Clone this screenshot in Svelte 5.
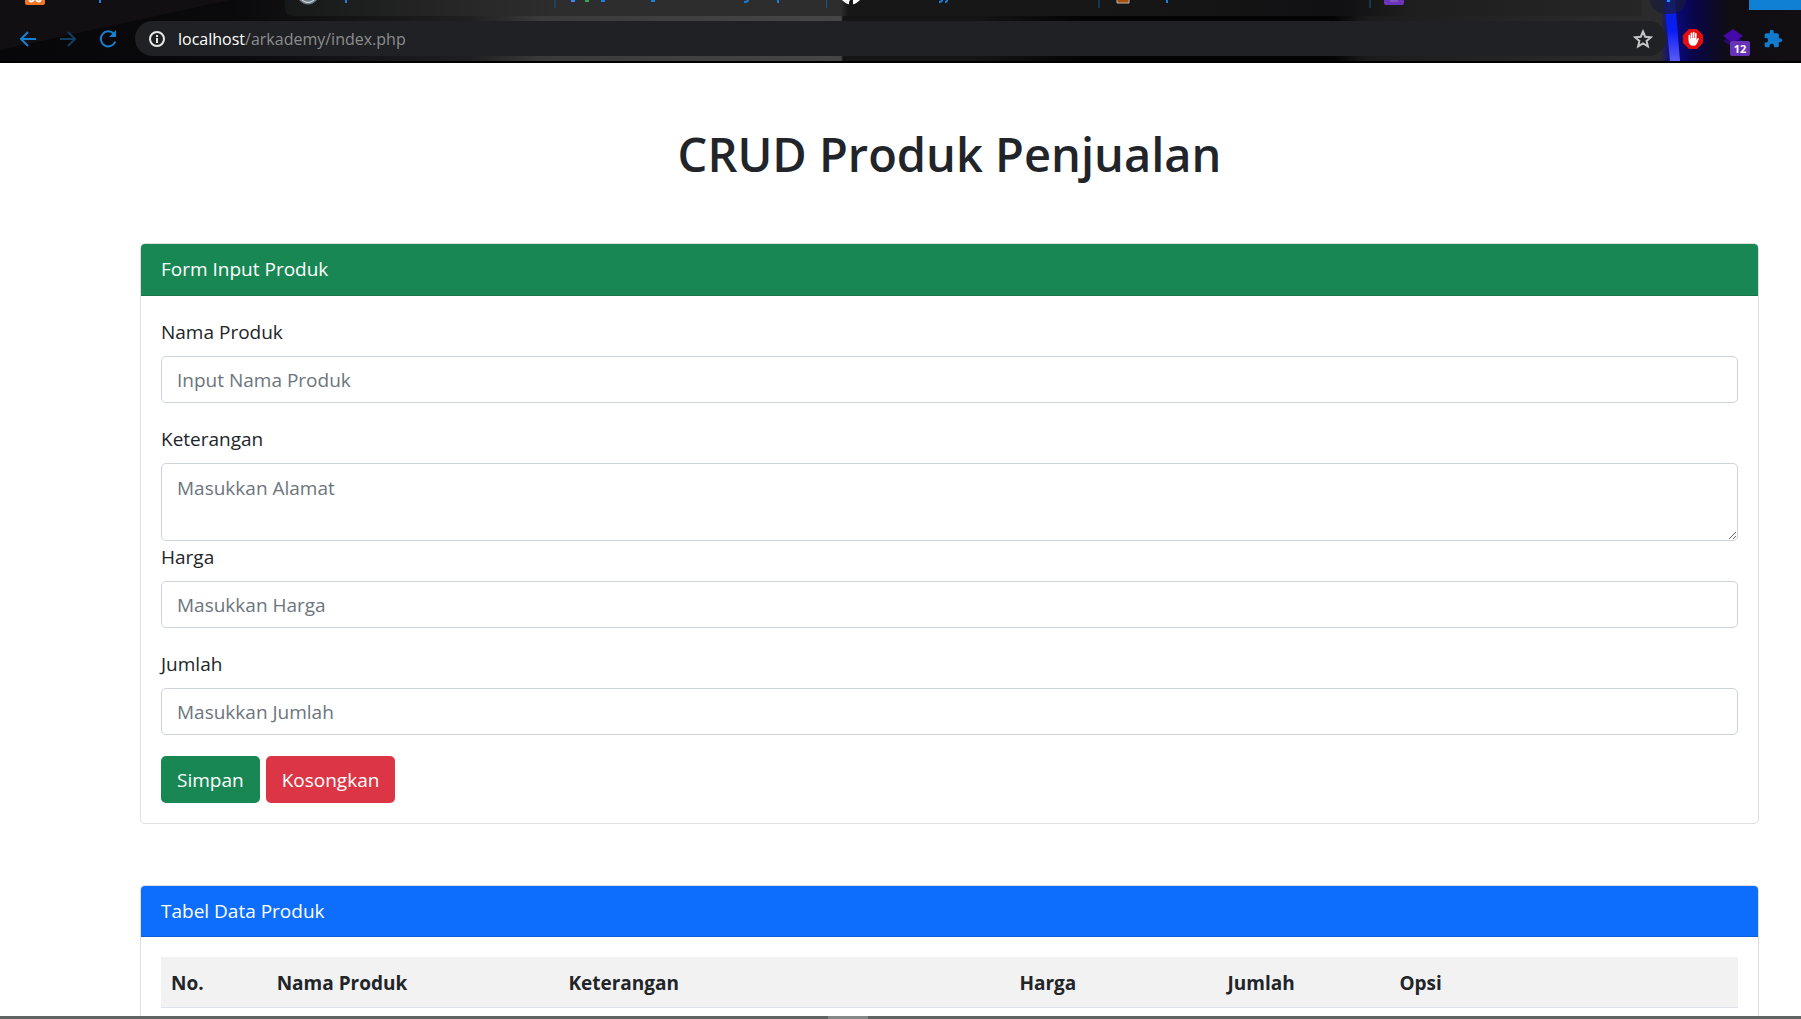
<script>
  const fields = [
    { id: 'nama', label: 'Nama Produk', hint: 'Input Nama Produk' },
    { id: 'keterangan', label: 'Keterangan', hint: 'Masukkan Alamat', area: true },
    { id: 'harga', label: 'Harga', hint: 'Masukkan Harga' },
    { id: 'jumlah', label: 'Jumlah', hint: 'Masukkan Jumlah' },
  ];
  const columns = ['No.', 'Nama Produk', 'Keterangan', 'Harga', 'Jumlah', 'Opsi'];
</script>

<div class="screen">
  <header class="browser">
    <svg class="backdrop" viewBox="0 0 1801 63" preserveAspectRatio="none" aria-hidden="true">
      <defs>
        <linearGradient id="sky" x1="0" x2="1" y1="0" y2="0">
          <stop offset="0" stop-color="#070608" />
          <stop offset=".13" stop-color="#0a090b" />
          <stop offset=".26" stop-color="#1f1e20" />
          <stop offset=".3" stop-color="#3a3a3a" />
          <stop offset=".467" stop-color="#464646" />
          <stop offset=".468" stop-color="#151515" />
          <stop offset=".54" stop-color="#151515" />
          <stop offset=".6" stop-color="#050405" />
          <stop offset=".74" stop-color="#050405" />
          <stop offset=".76" stop-color="#1c1c1c" />
          <stop offset=".9" stop-color="#2b2b2b" />
          <stop offset=".922" stop-color="#2b2b2e" />
          <stop offset=".928" stop-color="#0a0a8c" />
          <stop offset=".94" stop-color="#08064a" />
          <stop offset=".96" stop-color="#100d13" />
          <stop offset="1" stop-color="#110f12" />
        </linearGradient>
        <linearGradient id="tabs" x1="0" x2="1" y1="0" y2="0">
          <stop offset="0" stop-color="#171818" />
          <stop offset=".13" stop-color="#272727" />
          <stop offset=".2" stop-color="#2d2d2d" />
          <stop offset=".41" stop-color="#2d2d2d" />
          <stop offset=".415" stop-color="#171717" />
          <stop offset=".6" stop-color="#171717" />
          <stop offset=".78" stop-color="#111113" />
          <stop offset=".83" stop-color="#1e1e1e" />
          <stop offset="1" stop-color="#262626" />
        </linearGradient>
        <linearGradient id="beam" x1="0" x2="0" y1="0" y2="1">
          <stop offset="0" stop-color="#0720d8" />
          <stop offset=".5" stop-color="#0a1cf5" />
          <stop offset="1" stop-color="#5a5cf4" />
        </linearGradient>
      </defs>
      <rect width="1801" height="63" fill="url(#sky)" />
      <path d="M0 50 230 0H0Z" fill="#110f12" />
      <path d="M285 0h1357v16H293q-8 0-8-8Z" fill="url(#tabs)" />
      <path d="M1664 0h11l5 61h-10Z" fill="url(#beam)" />
      <rect y="61" width="1801" height="2" fill="#000" />
    </svg>
    <svg class="tabmarks" viewBox="0 0 1801 16" preserveAspectRatio="none" aria-hidden="true">
      <path d="M25 0h20v3q0 2-2 2H27q-2 0-2-2Z" fill="#f37423" />
      <path d="M29 0q2 3 5 0m2 0q3 3 5 0" fill="none" stroke="#fff" stroke-width="2" />
      <path d="M99 0h2v3h-2ZM345 0h2v3h-2ZM777 0h2v3h-2ZM1166 0h2v3h-2Z" fill="#1a7fe0" />
      <path d="M299 0q9 9 18 0Z" fill="#70818c" />
      <path d="M302 0q6 5 12 0" fill="none" stroke="#dde5e8" />
      <path d="M555 0v8M826.500 0v8M1099 0v8M1370 0v8" stroke="#155a8c" stroke-width="1" />
      <path d="M571 0h4v2h-4Z" fill="#4285f4" /><path d="M585 0h4v2h-4Z" fill="#34a853" />
      <path d="M602 0v1h3M654 0v1h-3M744 2q4 0 4-2M939 2q3 0 3-2M945 2q2 0 2-2" fill="none" stroke="#1a7fe0" stroke-width="2" />
      <path d="M842 0q9 9 18 0Z" fill="#fff" /><path d="M849 2v3h4V0h-3Z" fill="#171717" />
      <path d="M1117 0v3h12V0" fill="#a6500e" stroke="#b9b9b9" />
      <path d="M1384 0h20v3q0 2-2 2h-16q-2 0-2-2Z" fill="#6b35b9" />
      <path d="M1390 1h8" stroke="#9572ca" />
      <path d="M1650 0q2 14 18 14t18-14Z" fill="#191b35" opacity=".7" />
      <path d="M1667 0h3v2h-3Z" fill="#168fff" />
      <path d="M1749 0h52v10h-52Z" fill="#1080d4" />
    </svg>
    <nav class="toolbar" aria-label="Browser">
      <div class="nav">
        <button aria-label="Back"><svg viewBox="0 0 20 20"><path d="M18 10H3M10 3l-7 7 7 7" /></svg></button>
        <button class="off" aria-label="Forward"><svg viewBox="0 0 20 20"><path d="M2 10h15M10 3l7 7-7 7" /></svg></button>
        <button aria-label="Reload"><svg viewBox="0 0 20 20"><path d="M16 5a7.500 7.500 0 1 0 1.300 7.500" /><path class="solid" d="M18 1v7h-7Z" /></svg></button>
      </div>
      <div class="address">
        <svg class="info" viewBox="0 0 18 18" aria-hidden="true"><circle cx="9" cy="9" r="7" /><path d="M9 8v5M9 5v2" /></svg>
        <a class="url" href="/arkademy/index.php"><b>localhost</b>/arkademy/index.php</a>
        <button aria-label="Bookmark"><svg class="star" viewBox="0 0 20 20"><path d="m10 2.500 2.200 5.200 5.700.5-4.300 3.700 1.300 5.500-4.900-2.900-4.900 2.900 1.300-5.500L2.100 8.200l5.700-.5Z" /></svg></button>
      </div>
      <div class="extensions">
        <button aria-label="Ad blocker"><svg viewBox="0 0 20 20"><path d="M6 0h8l6 6v8l-6 6H6l-6-6V6Z" fill="#e40d0d" /><path d="M5.500 11V6.200q.8-.9 1.600 0V9.500h.5V4q.8-.9 1.700 0v5h.5V3.200q.8-.9 1.700 0V9h.5V4.200q.8-.9 1.600 0V11l1-1.800q1.200-.6 1.300.5l-1.800 4.500q-1 2.600-3.600 2.600-5 0-5-5.800Z" fill="#fff" /></svg></button>
        <button class="layers" aria-label="Layers"><svg viewBox="0 0 20 20"><path d="M0 12l4-3 12 0 4 3-10 6Z" fill="#260a69" /><path d="m10 0 10 7-10 7L0 7Z" fill="#4409a8" /></svg><span>12</span></button>
        <button aria-label="Extensions"><svg viewBox="0 0 24 24"><path d="M20.500 11H19V7a2 2 0 0 0-2-2h-4V3.500a2.500 2.500 0 0 0-5 0V5H4a2 2 0 0 0-2 2v3.800h1.500a2.700 2.700 0 0 1 0 5.400H2V20a2 2 0 0 0 2 2h3.800v-1.500a2.700 2.700 0 0 1 5.400 0V22H17a2 2 0 0 0 2-2v-4h1.500a2.500 2.500 0 0 0 0-5Z" fill="#127bcc" /></svg></button>
      </div>
    </nav>
  </header>

  <main>
    <h1>CRUD Produk Penjualan</h1>

    <section class="card">
      <h2 class="green">Form Input Produk</h2>
      <form class="body" onsubmit={(e) => e.preventDefault()}>
        {#each fields as f}
          <div class="field" class:tight={f.area}>
            <label for={f.id}>{f.label}</label>
            {#if f.area}
              <textarea id={f.id} placeholder={f.hint}></textarea>
            {:else}
              <input id={f.id} type="text" placeholder={f.hint} />
            {/if}
          </div>
        {/each}
        <div class="actions">
          <button class="btn green" type="submit">Simpan</button>
          <button class="btn red" type="reset">Kosongkan</button>
        </div>
      </form>
    </section>

    <section class="card">
      <h2 class="blue">Tabel Data Produk</h2>
      <div class="body">
        <table>
          <colgroup>
            <col class="c-no" /><col class="c-name" /><col class="c-desc" /><col class="c-price" /><col class="c-qty" /><col />
          </colgroup>
          <thead>
            <tr>
              {#each columns as c}<th scope="col">{c}</th>{/each}
            </tr>
          </thead>
        </table>
      </div>
    </section>
  </main>
  <footer class="edge"><i></i></footer>
</div>

<style>
  :global(body) { margin: 0; background: #fff; }
  * { box-sizing: border-box; }
  .screen {
    display: flex;
    flex-direction: column;
    height: 100vh;
    overflow: hidden;
    font: 400 19px/30px 'Open Sans', 'Noto Sans', sans-serif;
    color: #212529;
  }
  button { font: inherit; border: 0; padding: 0; background: none; cursor: pointer; }

  .browser { position: relative; flex: none; padding: 16px 0 2px; background: #0c0a0d; }
  .backdrop, .tabmarks { position: absolute; top: 0; left: 0; width: 100%; }
  .backdrop { height: 100%; }
  .tabmarks { height: 16px; }
  .toolbar { position: relative; display: flex; align-items: center; height: 45px; padding: 0 18px; }
  .nav { display: flex; gap: 20px; width: 117px; }
  .toolbar svg { display: block; width: 20px; height: 20px; }
  .nav path { fill: none; stroke: #1580d2; stroke-width: 2; }
  .nav .off path { stroke: #103d61; }
  .nav .solid { fill: #1580d2; stroke: none; }
  .address {
    flex: 1;
    display: flex;
    align-items: center;
    height: 35px;
    padding: 0 13px;
    border-radius: 18px;
    background: #202124;
  }
  .address .info { width: 18px; height: 18px; margin-right: 12px; }
  .info circle, .info path { fill: none; stroke: #e8e8e8; stroke-width: 2; }
  .url { flex: 1; font-size: 16px; line-height: 24px; color: #8c8d8f; text-decoration: none; }
  .url b { font-weight: 400; color: #fff; }
  .star path { fill: none; stroke: #c4c5c7; stroke-width: 2; }
  .extensions { display: flex; align-items: center; gap: 20px; margin-left: 17px; }
  .layers { position: relative; }
  .layers span {
    position: absolute;
    top: 12px;
    left: 7px;
    width: 20px;
    border-radius: 2px;
    background: #6734b8;
    color: #fff;
    font-size: 11px;
    font-weight: 700;
    line-height: 15px;
    text-align: center;
  }

  main { flex: 1; min-height: 0; overflow: hidden; padding: 60px 42px 0 140px; }
  h1 { margin: 0; font-size: 47px; line-height: 62px; font-weight: 600; text-align: center; }
  .card { margin-top: 58px; border: 1px solid #dfdfdf; border-radius: 5px; }
  .card + .card { margin-top: 61px; }
  h2 {
    margin: 0;
    padding: 10px 20px;
    border-bottom: 1px solid rgba(0, 0, 0, .125);
    border-radius: 4px 4px 0 0;
    color: #fff;
    font-size: 19px;
    line-height: 31px;
    font-weight: 400;
  }
  .green { background: #198754; }
  .blue { background: #0d6efd; }
  .card + .card h2 { line-height: 30px; }
  .red { background: #dc3545; }
  .body { padding: 20px; }
  .field { margin-bottom: 20px; }
  .tight { margin-bottom: 0; }
  label { display: block; margin-bottom: 8px; line-height: 32px; }
  input, textarea {
    display: block;
    width: 100%;
    height: 47px;
    padding: 8px 15px;
    border: 1px solid #ced4da;
    border-radius: 5px;
    background: #fff;
    color: #212529;
    font: inherit;
  }
  textarea { height: 78px; padding-top: 9px; resize: vertical; }
  input::placeholder, textarea::placeholder { color: #6c757d; opacity: 1; }
  .actions { display: flex; gap: 6px; padding-top: 1px; }
  .btn { height: 47px; padding: 0 16px; border-radius: 5px; color: #fff; }

  table { width: 100%; table-layout: fixed; border-collapse: collapse; }
  th { padding: 11px 10px 9px; border-bottom: 1px solid #dee2e6; background: #f2f2f2; text-align: left; font-weight: 700; }
  .c-no { width: 6.7%; }
  .c-name { width: 18.5%; }
  .c-desc { width: 28.6%; }
  .c-price { width: 13.2%; }
  .c-qty { width: 10.9%; }

  .edge { flex: none; display: flex; height: 3px; background: #606462; }
  .edge i { width: 40px; margin-left: 46%; background: #858987; }
</style>
